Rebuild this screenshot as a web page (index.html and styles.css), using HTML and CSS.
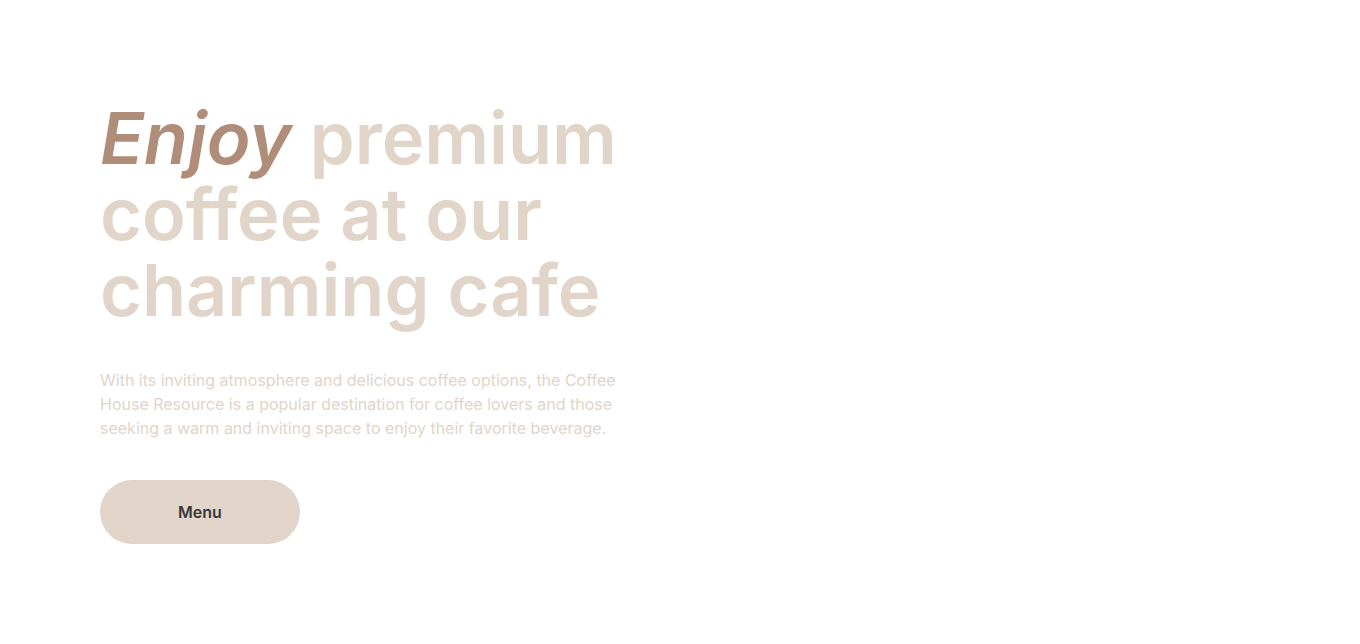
FILE: index.html
```html
<!DOCTYPE html>
<html lang="en">
<head>
<meta charset="utf-8">
<title>Coffee House</title>
<link rel="stylesheet" href="styles.css">
</head>
<body>
<main class="hero">
  <h1 class="hero-title"><em class="accent">Enjoy</em> premium coffee at our charming cafe</h1>
  <p class="hero-text">With its inviting atmosphere and delicious coffee options, the Coffee House Resource is a popular destination for coffee lovers and those seeking a warm and inviting space to enjoy their favorite beverage.</p>
  <a class="btn" href="#">Menu</a>
</main>
</body>
</html>
```
FILE: styles.css
```css
* { box-sizing: border-box; }
html, body { margin: 0; padding: 0; background: #fff; }
body { font-family: Inter, "Noto Sans", sans-serif; }
.hero {
  padding: 100px 100px;
  display: flex;
  flex-direction: column;
  align-items: flex-start;
}
.hero-title {
  margin: 0;
  max-width: 540px;
  font-size: 72px;
  line-height: 76px;
  font-weight: 600;
  color: #e1d4c9;
}
.accent {
  font-style: italic;
  color: #b08d79;
}
.hero-text {
  margin: 40px 0 0;
  max-width: 525px;
  font-size: 16px;
  line-height: 24px;
  color: #e1d4c9;
}
.btn {
  margin-top: 40px;
  width: 200px;
  height: 64px;
  border-radius: 32px;
  background: #e1d4c9;
  color: #383838;
  font-size: 16px;
  font-weight: 600;
  text-decoration: none;
  display: flex;
  align-items: center;
  justify-content: center;
}
```
